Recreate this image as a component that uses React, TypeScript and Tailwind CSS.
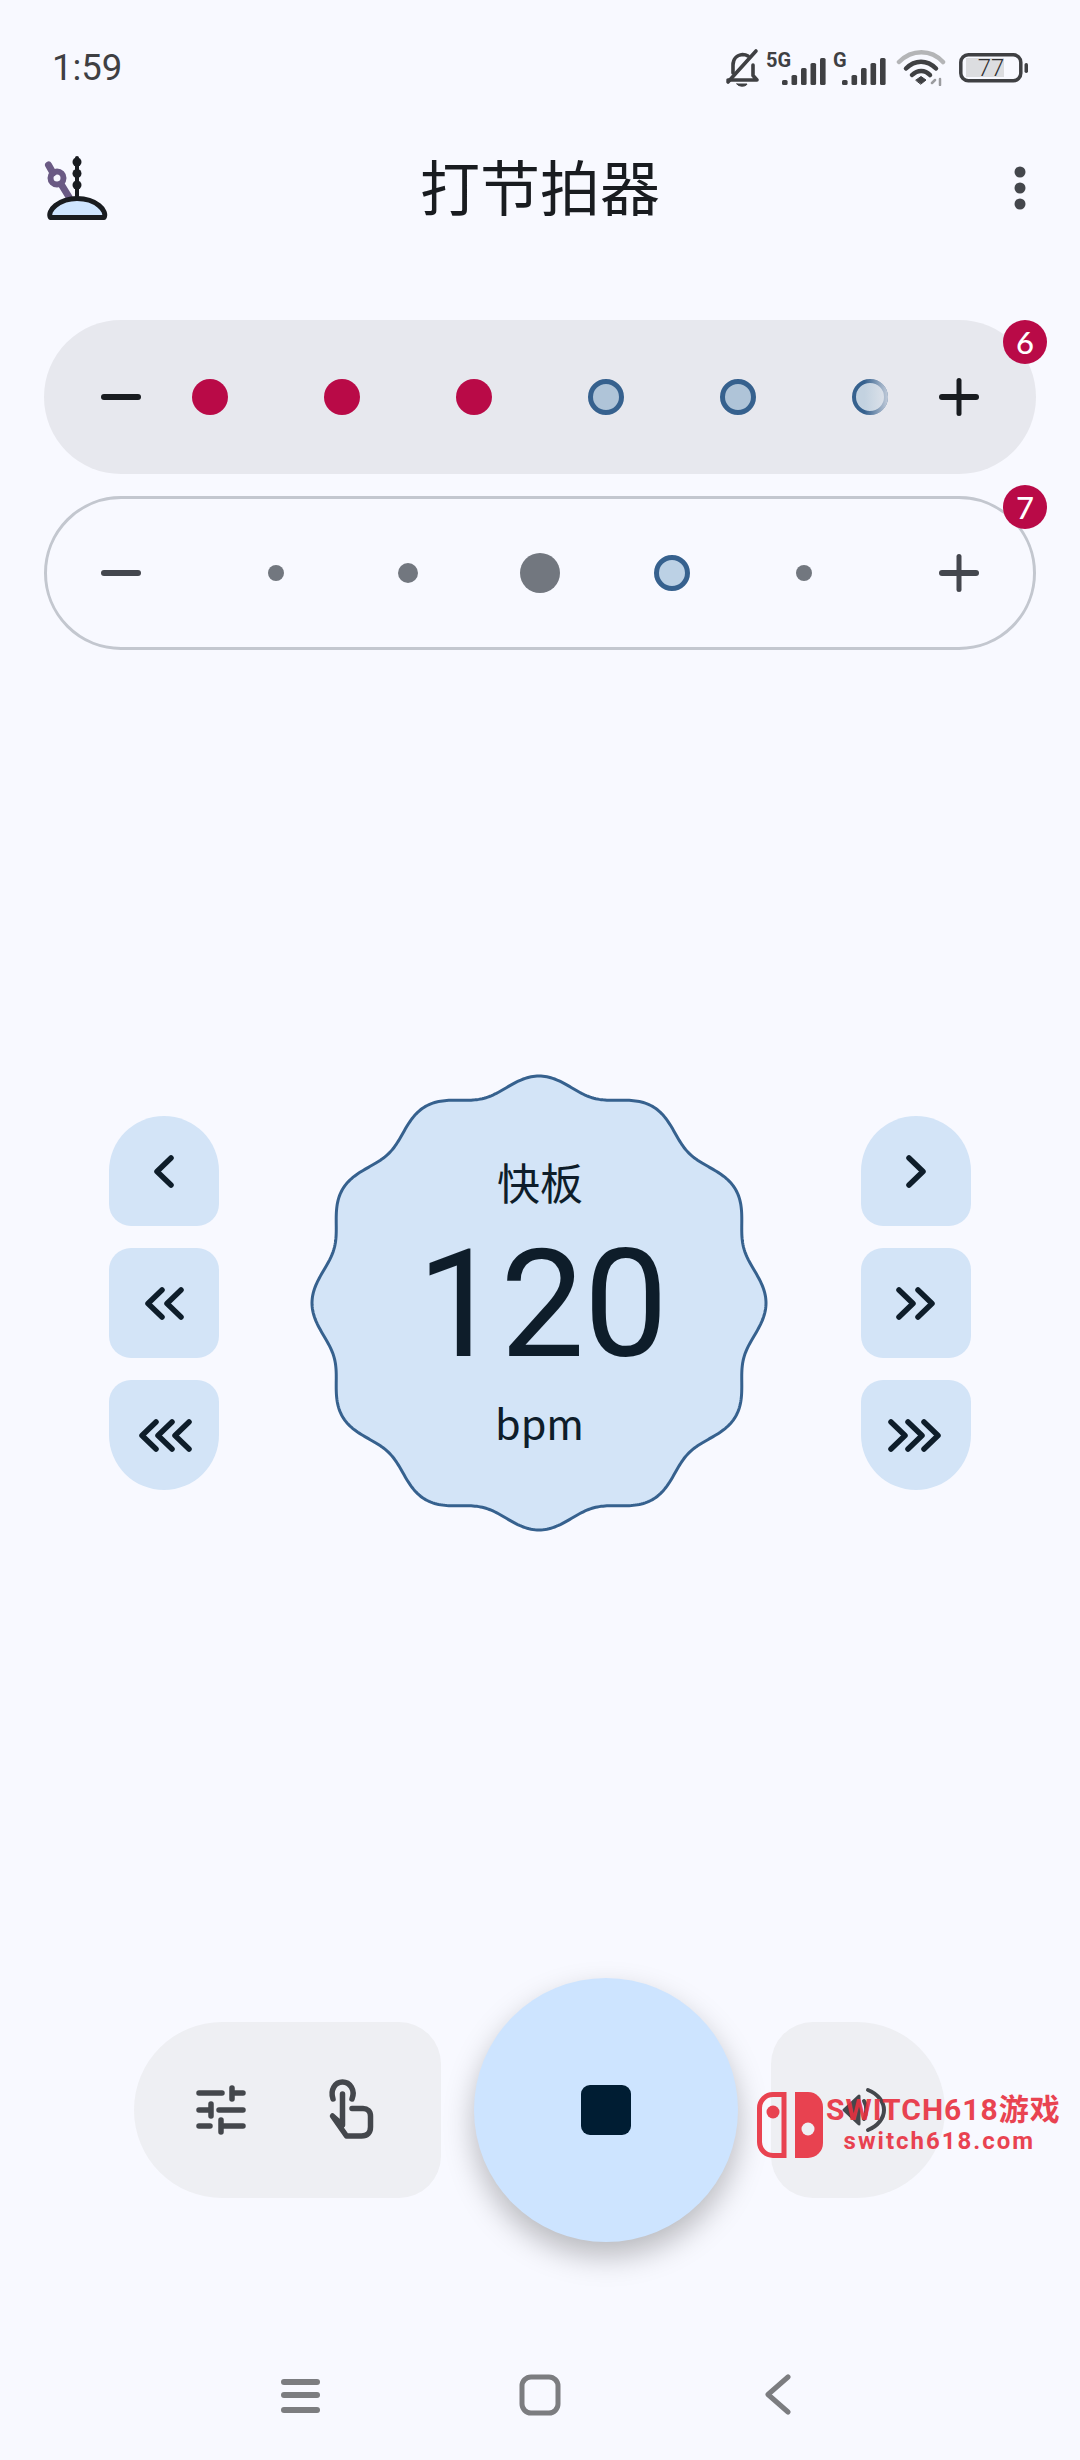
const cookie = (() => {
  const c = 230;
  const pts: string[] = [];
  for (let i = 0; i < 720; i++) {
    const t = (i / 720) * Math.PI * 2;
    const r = 219.5 + 7.5 * Math.cos(12 * t);
    pts.push(`${(c + r * Math.sin(t)).toFixed(2)} ${(c - r * Math.cos(t)).toFixed(2)}`);
  }
  return `M${pts.join("L")}Z`;
})();

const SANS = "font-['Roboto','Noto_Sans_CJK_SC',sans-serif]";
const CJK = "font-['Noto_Sans_CJK_SC','Noto_Sans',sans-serif]";

function Bars() {
  const hs = [5, 10, 17, 22, 27];
  return (
    <svg width="44" height="27" viewBox="0 0 44 27" className="block">
      {hs.map((h, i) => (
        <rect key={i} x={i * 9.5} y={27 - h} width="5.6" height={h} rx="1.6" fill="#3f4043" />
      ))}
    </svg>
  );
}

function StatusBar() {
  return (
    <div className="h-[136px] relative flex items-center justify-between pl-[52px] pr-[51px]">
      <span className={`${SANS} text-[36.5px] leading-none text-[#3f4043] font-normal`}>1:59</span>
      <div className="flex items-center">
        <svg width="36" height="40" viewBox="724 49 36 40" className="block" fill="none" stroke="#3f4043" strokeWidth="3.6" strokeLinecap="round" strokeLinejoin="round">
          <path d="M727 81h29l-4-4.500V66" />
          <path d="M732 74V66c0-6 4-10 9.500-10.500 2 0 4 .5 5.500 1.500" />
          <path d="M727 83 755 52" />
          <path d="M736 85h10c-1 3-8.500 3-10 0Z" fill="#3f4043" strokeWidth="1" />
        </svg>
        <div className="relative w-[61px] h-[34px] ml-[5px]">
          <span className={`${SANS} absolute left-0 top-0 text-[20px] leading-[18px] font-bold text-[#3f4043]`}>5G</span>
          <div className="absolute left-[16px] bottom-0"><Bars /></div>
        </div>
        <div className="relative w-[52px] h-[34px] ml-[6px]">
          <span className={`${SANS} absolute left-0 top-0 text-[20px] leading-[18px] font-bold text-[#3f4043]`}>G</span>
          <div className="absolute left-[9px] bottom-0"><Bars /></div>
        </div>
        <svg width="50" height="36" viewBox="897 51 50 36" className="block ml-[11px]" fill="none" strokeLinecap="round">
          <path d="M900 63c13-13 32-13 44 0" stroke="#b4b5b7" strokeWidth="4.500" />
          <path d="M907 69.500c9-9 21-9 30 0" stroke="#3f4043" strokeWidth="4.500" />
          <path d="M913 76c5.500-5.500 13-5.500 18 0" stroke="#3f4043" strokeWidth="4.500" />
          <path d="M917 81l5-3.500 5 3.500-5 4Z" fill="#3f4043" stroke="#3f4043" strokeWidth="1" />
          <path d="M933 84l3-3M941 86v-6" stroke="#9b9c9f" strokeWidth="2.500" />
        </svg>
        <svg width="72" height="32" viewBox="958 52 72 32" className="block ml-[11px]">
          <rect x="967" y="58" width="38" height="19" fill="#dcdde0" />
          <rect x="961.800" y="54.800" width="60" height="26" rx="7.500" fill="none" stroke="#3f4043" strokeWidth="3.500" />
          <rect x="1025.500" y="63" width="3.500" height="10" rx="1.700" fill="#3f4043" />
          <text x="992" y="75.500" textAnchor="middle" fontFamily="Roboto" fontSize="24" fontWeight="300" fill="#2f3033">77</text>
        </svg>
      </div>
    </div>
  );
}

function Header() {
  return (
    <div className="h-[104px] relative flex items-center justify-between pl-[44px] pr-[54px]">
      <svg width="66" height="68" viewBox="44 154 66 68" className="block" fill="none" strokeLinecap="round">
        <path d="M48.500 165l4.500 8M61 184l8 13" stroke="#6a5a84" strokeWidth="7" />
        <circle cx="57" cy="178" r="6.500" stroke="#6a5a84" strokeWidth="6" />
        <path d="M77 158v38" stroke="#191c20" strokeWidth="4" />
        <circle cx="77" cy="162" r="4.500" fill="#191c20" />
        <circle cx="77" cy="173.500" r="4.500" fill="#191c20" />
        <circle cx="77" cy="185" r="4.500" fill="#191c20" />
        <path d="M50.500 217.500c-2-3 0-8 5-12 6.500-5 14-7 21.500-7s16 2 22 7c5 4 7 9 5 12Z" fill="#cfe5ff" stroke="#191c20" strokeWidth="5" strokeLinejoin="round" />
      </svg>
      <h1 className={`${CJK} absolute left-0 right-0 text-center text-[60px] leading-[98px] font-normal text-[#191c20] pb-[6px]`}>打节拍器</h1>
      <svg width="12" height="44" viewBox="0 0 12 44" className="block">
        <circle cx="6" cy="6" r="5.500" fill="#44474c" />
        <circle cx="6" cy="22" r="5.500" fill="#44474c" />
        <circle cx="6" cy="38" r="5.500" fill="#44474c" />
      </svg>
    </div>
  );
}

function Minus({ color }: { color: string }) {
  return (
    <svg width="40" height="40" viewBox="0 0 40 40" className="block shrink-0">
      <rect x="0" y="17" width="40" height="6" rx="3" fill={color} />
    </svg>
  );
}
function Plus({ color }: { color: string }) {
  return (
    <svg width="40" height="40" viewBox="0 0 40 40" className="block shrink-0">
      <rect x="0" y="17" width="40" height="6" rx="3" fill={color} />
      <rect x="17.500" y="1" width="5" height="38" rx="2.500" fill={color} />
    </svg>
  );
}

function Badge({ n, className }: { n: number; className: string }) {
  return (
    <div className={`absolute w-[44px] h-[44px] rounded-full bg-[#b90a47] flex items-center justify-center text-white text-[31px] leading-none font-['Lato',sans-serif] font-medium ${className}`}>
      {n}
    </div>
  );
}

function Slot({ children }: { children: React.ReactNode }) {
  return <div className="w-[132px] flex items-center justify-center">{children}</div>;
}
const Red = () => <div className="w-[36px] h-[36px] rounded-full bg-[#b90a47]" />;
const Ring = ({ bg }: { bg: string }) => <div className={`w-[36px] h-[36px] rounded-full border-[5px] border-[#36618e] ${bg}`} />;

function Panels() {
  return (
    <div className="mt-[80px] mx-[44px] flex flex-col gap-[22px]">
      <div className="relative h-[154px] rounded-[77px] bg-[#e7e8ee] px-[57px] flex items-center justify-between">
        <Minus color="#191c20" />
        <div className="flex">
          <Slot><Red /></Slot>
          <Slot><Red /></Slot>
          <Slot><Red /></Slot>
          <Slot><Ring bg="bg-[#afc4d8]" /></Slot>
          <Slot><Ring bg="bg-[#afc4d8]" /></Slot>
          <Slot>
            <div className="relative w-[36px] h-[36px] rounded-full border-[4px] border-[#36618e] bg-[#c3d2e0]">
              <div className="absolute -inset-[4px] rounded-full bg-gradient-to-r from-transparent from-35% to-[#e7e8ee]/80" />
            </div>
          </Slot>
        </div>
        <Plus color="#191c20" />
        <Badge n={6} className="top-0 -right-[11px]" />
      </div>
      <div className="relative h-[154px] rounded-[77px] border-[3px] border-[#c3c7cf] px-[54px] flex items-center justify-between">
        <Minus color="#44474e" />
        <div className="flex">
          <Slot><div className="w-[16px] h-[16px] rounded-full bg-[#72777f]" /></Slot>
          <Slot><div className="w-[20px] h-[20px] rounded-full bg-[#72777f]" /></Slot>
          <Slot><div className="w-[40px] h-[40px] rounded-full bg-[#72777f]" /></Slot>
          <Slot><Ring bg="bg-[#bcd1e5]" /></Slot>
          <Slot><div className="w-[16px] h-[16px] rounded-full bg-[#72777f]" /></Slot>
        </div>
        <Plus color="#44474e" />
        <Badge n={7} className="-top-[14px] -right-[14px]" />
      </div>
    </div>
  );
}

function Chevrons({ tips, mirror }: { tips: number[]; mirror?: boolean }) {
  return (
    <svg width="110" height="110" viewBox="0 0 110 110" className={`block ${mirror ? "-scale-x-100" : ""}`} fill="none" stroke="#0e1d2a" strokeWidth="5.500" strokeLinecap="round" strokeLinejoin="round">
      {tips.map((x) => (
        <path key={x} d={`M${x + 14} 42 ${x} 55.500 ${x + 14} 69`} />
      ))}
    </svg>
  );
}

function StepColumn({ mirror }: { mirror?: boolean }) {
  return (
    <div className="flex flex-col gap-[22px]">
      <div className="w-[110px] h-[110px] rounded-t-[55px] rounded-b-[22px] bg-[#d3e4f7]"><Chevrons tips={[48]} mirror={mirror} /></div>
      <div className="w-[110px] h-[110px] rounded-[22px] bg-[#d3e4f7]"><Chevrons tips={[39, 58]} mirror={mirror} /></div>
      <div className="w-[110px] h-[110px] rounded-t-[22px] rounded-b-[55px] bg-[#d3e4f7]"><Chevrons tips={[33, 49, 66]} mirror={mirror} /></div>
    </div>
  );
}

function Tempo() {
  return (
    <div className="relative w-[460px] h-[460px] flex flex-col items-center pt-[79px] text-[#0e1d2a]">
      <svg width="460" height="460" viewBox="0 0 460 460" className="absolute left-0 top-0">
        <path d={cookie} fill="#d3e4f7" stroke="#36618e" strokeWidth="3" />
      </svg>
      <div className={`relative ${CJK} text-[43px] leading-[58px] font-normal ml-[2px]`}>快板</div>
      <div className={`relative ${SANS} text-[150px] leading-[180px] tracking-[-1px] font-normal mt-[5px] ml-[6px]`}>120</div>
      <div className="relative font-['Lato',sans-serif] text-[44px] leading-[56px] font-normal tracking-[1px] ml-[2px]">bpm</div>
    </div>
  );
}

function Main() {
  return (
    <div className="mt-[423px] pl-[109px] flex items-center">
      <StepColumn />
      <div className="ml-[90px] mr-[92px]"><Tempo /></div>
      <StepColumn mirror />
    </div>
  );
}

function Controls() {
  return (
    <div className="mt-[445px] pl-[134px] h-[264px] flex items-center gap-[33px]">
      <div className="w-[307px] h-[176px] rounded-l-[88px] rounded-r-[42px] bg-[#eeeff3] flex items-center pl-[62px]">
        <svg width="50" height="50" viewBox="196 2085 50 50" className="block" fill="none" stroke="#44474c" strokeWidth="5.500" strokeLinecap="round">
          <path d="M199 2093h23M232 2088v11M232 2093h11" />
          <path d="M199 2110h11M211 2104v12M219 2110h24" />
          <path d="M199 2126h11M221 2120v12M221 2126h22" />
        </svg>
        <svg width="52" height="62" viewBox="326 2078 52 62" className="block ml-[79px]" fill="none" stroke="#44474c" strokeWidth="5.500" strokeLinecap="round" strokeLinejoin="round">
          <path d="M334 2098c-3-9 2-17 9.500-17s13 8 9.500 17" />
          <path d="M343.500 2093v31l-10-9 14 20h15c6 0 9-3.500 9-9v-11c0-5-3-7.500-7.500-7.500H353" />
        </svg>
      </div>
      <div className="w-[264px] h-[264px] rounded-full bg-[#cde4ff] shadow-[0_14px_30px_rgba(0,0,0,0.26)] flex items-center justify-center">
        <div className="w-[50px] h-[50px] rounded-[9px] bg-[#001d33]" />
      </div>
      <div className="w-[174px] h-[176px] rounded-r-[88px] rounded-l-[42px] bg-[#eeeff3] flex items-center pl-[69px]">
        <svg width="46" height="46" viewBox="838 2087 46 46" className="block" fill="none" stroke="#44474c" strokeLinecap="round" strokeLinejoin="round">
          <path d="M842 2110l15-14v28Z" fill="#44474c" strokeWidth="3" />
          <path d="M862 2101c3 5 3 13 0 18" strokeWidth="4" />
          <path d="M866 2090c10 4 16 12 16 20s-6 16-16 20" strokeWidth="4" />
        </svg>
      </div>
    </div>
  );
}

function Nav() {
  return (
    <div className="mt-[132px] h-[42px] pl-[281px] flex items-center">
      <svg width="40" height="42" viewBox="0 0 40 42" className="block">
        <rect y="5" width="39" height="6" rx="3" fill="#7c7d80" />
        <rect y="18" width="39" height="6" rx="3" fill="#7c7d80" />
        <rect y="33" width="39" height="6" rx="3" fill="#7c7d80" />
      </svg>
      <svg width="42" height="42" viewBox="0 0 42 42" className="block ml-[198px]">
        <rect x="3" y="3" width="36" height="36" rx="9" fill="none" stroke="#7c7d80" strokeWidth="5" />
      </svg>
      <svg width="28" height="42" viewBox="0 0 28 42" className="block ml-[203px]" fill="none" stroke="#7c7d80" strokeWidth="5" strokeLinecap="round" strokeLinejoin="round">
        <path d="M24 3 4 20.500 24 38" />
      </svg>
    </div>
  );
}

function Watermark() {
  return (
    <div className="absolute left-[757px] top-[2092px] flex opacity-90 text-[#e8303f]">
      <svg width="66" height="66" viewBox="0 0 66 66" className="block">
        <path d="M27 2.500H16A13.500 13.500 0 0 0 2.500 16V50A13.500 13.500 0 0 0 16 63.500H27Z" fill="none" stroke="#e8303f" strokeWidth="5" />
        <circle cx="16" cy="20" r="6.500" fill="#e8303f" />
        <path d="M38 0H51A15 15 0 0 1 66 15V51A15 15 0 0 1 51 66H38Z" fill="#e8303f" />
        <circle cx="51" cy="37" r="6.500" fill="#eeeff3" />
      </svg>
      <div className="ml-[3px] flex flex-col items-center">
        <div className={`${SANS} text-[30px] leading-[36px] font-bold tracking-[1px] whitespace-nowrap`}>SWITCH618游戏</div>
        <div className={`${SANS} text-[24px] leading-[26px] font-bold tracking-[2px] whitespace-nowrap -ml-[8px]`}>switch618.com</div>
      </div>
    </div>
  );
}

export default function App() {
  return (
    <div className="relative w-[1080px] h-[2460px] overflow-hidden bg-[#f8f9ff]">
      <StatusBar />
      <Header />
      <Panels />
      <Main />
      <Controls />
      <Nav />
      <Watermark />
    </div>
  );
}
